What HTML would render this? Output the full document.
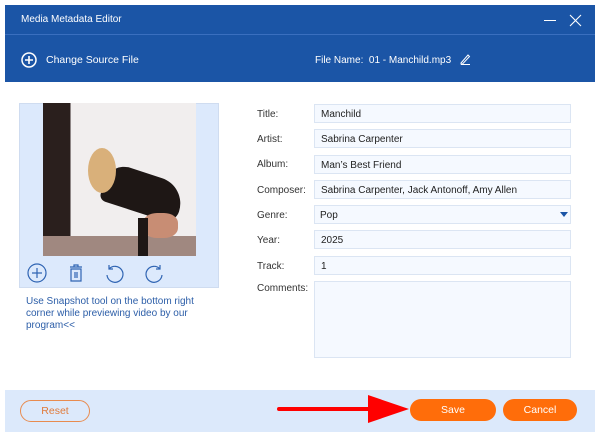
<!DOCTYPE html><html><head><style>
body{margin:0;width:600px;height:438px;background:#fff;font-family:"Liberation Sans",sans-serif;position:relative;overflow:hidden}
.a{position:absolute}
.hdr{left:5px;top:5px;width:590px;height:77px;background:#1b55a6}
.lbl{left:257px;font-size:10px;color:#333}
.inp{left:314px;width:257px;height:19px;background:#f5f9ff;border:1px solid #dbe5f3;font-size:10px;color:#222;line-height:20px;padding-left:6px;box-sizing:border-box}
.btn{border-radius:11px;font-size:10.5px;text-align:center;line-height:22px;height:22px}
</style></head><body>
<div class="a hdr"></div>
<div class="a" style="left:5px;top:34px;width:590px;height:1px;background:#3a6fbf"></div>
<div class="a" style="left:21px;top:14px;color:#fff;font-size:10px">Media Metadata Editor</div>
<div class="a" style="left:544px;top:20px;width:12px;height:1.2px;background:#fff"></div>
<svg class="a" style="left:569px;top:14px" width="13" height="13"><path d="M1 1L12 12M12 1L1 12" stroke="#fff" stroke-width="1.1"/></svg>
<svg class="a" style="left:21px;top:52px" width="16" height="16"><circle cx="8" cy="8" r="7" fill="none" stroke="#fff" stroke-width="1.5"/><path d="M8 4v8M4 8h8" stroke="#fff" stroke-width="1.6"/></svg>
<div class="a" style="left:46px;top:54px;color:#fff;font-size:10.5px">Change Source File</div>
<div class="a" style="left:315px;top:55px;color:#fff;font-size:10px">File Name:&nbsp; 01 - Manchild.mp3</div>
<svg class="a" style="left:459px;top:53px" width="12" height="12"><path d="M2 10L9 2l1.5 1.5L3.5 11H2z M2 11.5h9" fill="none" stroke="#fff" stroke-width="1"/></svg>
<div class="a" style="left:19px;top:103px;width:200px;height:185px;background:#dce9fc;border:1px solid #cfdcf0;box-sizing:border-box"></div>
<div class="a" style="left:43px;top:103px;width:153px;height:153px;background:linear-gradient(90deg,#2a1f1d 0 18%,#f1eeee 18% 100%);overflow:hidden">
<div class="a" style="left:0;top:133px;width:153px;height:20px;background:#a08880"></div>
<div class="a" style="left:60px;top:70px;width:80px;height:40px;background:#1e1715;border-radius:30px 40px 20px 10px;transform:rotate(18deg)"></div>
<div class="a" style="left:45px;top:45px;width:28px;height:45px;background:#d9b07a;border-radius:50%"></div>
<div class="a" style="left:100px;top:110px;width:35px;height:25px;background:#c88d74;border-radius:40%"></div>
<div class="a" style="left:95px;top:115px;width:10px;height:38px;background:#1e1715"></div>
</div>
<svg class="a" style="left:26px;top:262px" width="150" height="22" fill="none" stroke="#2f64b3" stroke-width="1.2"><circle cx="11" cy="11" r="9"/><path d="M11 6v10M6 11h10"/><path d="M44 5h12M48 5V3h4v2M45 7h10v12H45zM49 10v6M51 10v6"/><path d="M83 7a8 8 0 1 1-2 6M83 3v4h4"/><path d="M134 7a8 8 0 1 0 2 6M134 3v4h-4"/></svg>
<div class="a" style="left:26px;top:296px;width:190px;font-size:10px;line-height:12px;color:#2c5ea8">Use Snapshot tool on the bottom right corner while previewing video by our program&lt;&lt;</div>
<div class="a lbl" style="top:109px">Title:</div><div class="a inp" style="top:104px">Manchild</div>
<div class="a lbl" style="top:134px">Artist:</div><div class="a inp" style="top:129px">Sabrina Carpenter</div>
<div class="a lbl" style="top:159px">Album:</div><div class="a inp" style="top:155px">Man’s Best Friend</div>
<div class="a lbl" style="top:185px">Composer:</div><div class="a inp" style="top:180px">Sabrina Carpenter, Jack Antonoff, Amy Allen</div>
<div class="a lbl" style="top:210px">Genre:</div><div class="a inp" style="top:205px;padding-left:5px">Pop</div>
<svg class="a" style="left:560px;top:212px" width="8" height="6"><path d="M0 0h8L4 5z" fill="#1b55a6"/></svg>
<div class="a lbl" style="top:235px">Year:</div><div class="a inp" style="top:230px">2025</div>
<div class="a lbl" style="top:261px">Track:</div><div class="a inp" style="top:256px">1</div>
<div class="a lbl" style="top:283px">Comments:</div><div class="a inp" style="top:281px;height:77px"></div>
<div class="a" style="left:5px;top:390px;width:590px;height:42px;background:#dce9fb"></div>
<div class="a btn" style="left:20px;top:400px;width:70px;border:1px solid #e88b4f;color:#e07a3a;box-sizing:border-box;line-height:20px">Reset</div>
<div class="a btn" style="left:410px;top:399px;width:86px;background:#ff6d0a;color:#fff">Save</div>
<div class="a btn" style="left:503px;top:399px;width:74px;background:#ff6d0a;color:#fff">Cancel</div>
<svg class="a" style="left:275px;top:393px" width="135" height="32"><path d="M4 16H95" stroke="#f00" stroke-width="4" stroke-linecap="round"/><path d="M93 2L134 16L93 30z" fill="#f00"/></svg>
</body></html>
